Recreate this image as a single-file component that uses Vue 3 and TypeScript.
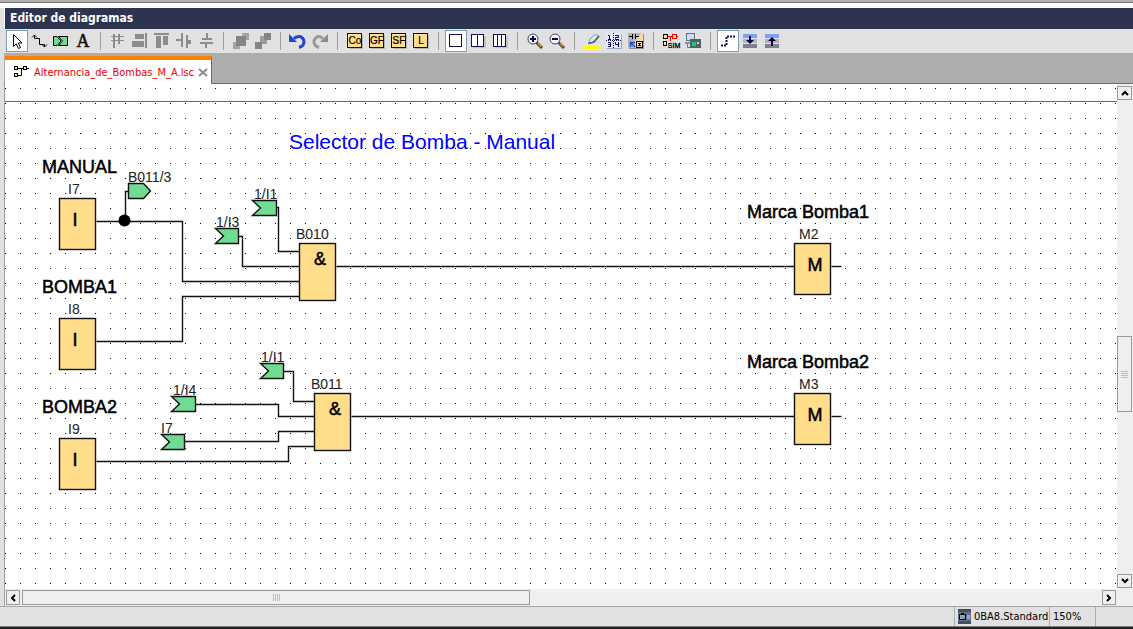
<script setup lang="ts">
import { ref } from 'vue'

interface Tool { id: string; label: string }
interface Block { x: number; y: number; h: number; name: string; nx: number; sym: string; sx: number; sy: number }
interface Tag { x: number; y: number; w: number; label: string; lx: number; ly: number }
interface Caption { x: number; y: number; text: string }

const groups: Tool[][] = [
  [
    { id: 'select', label: 'Herramienta de selección' },
    { id: 'wire', label: 'Herramienta de conexión' },
    { id: 'cut', label: 'Cortar/unir conexión' },
    { id: 'text', label: 'Herramienta de texto' },
  ],
  [
    { id: 'grid', label: 'Alinear automáticamente' },
    { id: 'right', label: 'Alinear a la derecha' },
    { id: 'top', label: 'Alinear arriba' },
    { id: 'hspace', label: 'Distribuir horizontalmente' },
    { id: 'vspace', label: 'Distribuir verticalmente' },
  ],
  [
    { id: 'front', label: 'Traer al frente' },
    { id: 'back', label: 'Enviar al fondo' },
  ],
  [
    { id: 'undo', label: 'Deshacer' },
    { id: 'redo', label: 'Rehacer' },
  ],
  [
    { id: 'Co', label: 'Constantes' },
    { id: 'GF', label: 'Funciones básicas' },
    { id: 'SF', label: 'Funciones especiales' },
    { id: 'L', label: 'Registro' },
  ],
  [
    { id: 'one', label: 'Una ventana' },
    { id: 'two', label: 'Dos ventanas' },
    { id: 'three', label: 'Tres ventanas' },
  ],
  [
    { id: 'zoomin', label: 'Ampliar' },
    { id: 'zoomout', label: 'Reducir' },
  ],
  [
    { id: 'marker', label: 'Resaltar' },
    { id: 'pages', label: 'Disposición de página' },
    { id: 'convert', label: 'Convertir' },
  ],
  [
    { id: 'sim', label: 'Simulación' },
    { id: 'online', label: 'Test online' },
  ],
  [
    { id: 'lines', label: 'Líneas de referencia' },
    { id: 'download', label: 'Expandir parámetros' },
    { id: 'upload', label: 'Contraer parámetros' },
  ],
]

const pressed = ref<string[]>(['select', 'one', 'lines'])

const blocks: Block[] = [
  { x: 59, y: 198, h: 51, name: 'I7', nx: 68, sym: 'I', sx: 75, sy: 226 },
  { x: 59, y: 318, h: 51, name: 'I8', nx: 68, sym: 'I', sx: 75, sy: 346 },
  { x: 59, y: 438, h: 51, name: 'I9', nx: 68, sym: 'I', sx: 75, sy: 466 },
  { x: 299, y: 243, h: 57, name: 'B010', nx: 296, sym: '&', sx: 320, sy: 265 },
  { x: 314, y: 393, h: 57, name: 'B011', nx: 311, sym: '&', sx: 335, sy: 415 },
  { x: 794, y: 243, h: 51, name: 'M2', nx: 799, sym: 'M', sx: 815, sy: 271 },
  { x: 794, y: 393, h: 51, name: 'M3', nx: 799, sym: 'M', sx: 815, sy: 421 },
]

const tags: Tag[] = [
  { x: 252, y: 200, w: 24, label: '1/I1', lx: 254, ly: 199 },
  { x: 215, y: 228, w: 23, label: '1/I3', lx: 216, ly: 227 },
  { x: 260, y: 363, w: 23, label: '1/I1', lx: 261, ly: 362 },
  { x: 171, y: 396, w: 24, label: '1/I4', lx: 173, ly: 395 },
  { x: 161, y: 434, w: 23, label: 'I7', lx: 161, ly: 433 },
]

const wires: string[] = [
  'M96 221H182V281H299',
  'M125 221V191H128',
  'M276 207H278V251H299',
  'M238 236H242V266H299',
  'M96 341H182V296H299',
  'M336 266H794',
  'M831 266H841',
  'M283 371H293V401H314',
  'M195 404H278V416H314',
  'M184 441H278V431H314',
  'M96 461H288V446H314',
  'M351 416H794',
  'M831 416H841',
]

const captions: Caption[] = [
  { x: 42, y: 173, text: 'MANUAL' },
  { x: 42, y: 293, text: 'BOMBA1' },
  { x: 42, y: 413, text: 'BOMBA2' },
  { x: 747, y: 218, text: 'Marca Bomba1' },
  { x: 747, y: 368, text: 'Marca Bomba2' },
]

function toggle(id: string) {
  const i = pressed.value.indexOf(id)
  if (i >= 0) pressed.value.splice(i, 1)
  else pressed.value.push(id)
}
</script>

<template>
  <div class="app">
    <div class="edge-top"></div>
    <main class="panel">
      <h1 class="title">Editor de diagramas</h1>

      <div class="toolbar" role="toolbar" aria-label="Herramientas">
        <div v-for="(group, g) in groups" :key="g" class="group">
          <button
            v-for="t in group"
            :key="t.id"
            type="button"
            class="tool"
            :class="{ on: pressed.includes(t.id) }"
            :aria-label="t.label"
            :aria-pressed="pressed.includes(t.id)"
            @click="toggle(t.id)"
          >
            <svg width="22" height="22" viewBox="0 0 22 22" fill="none">
              <path v-if="t.id === 'select'" d="M7.5 4.5V16.5L10.2 13.8L12.5 18.5L14.5 17.5L12.3 13H16Z" fill="#fff" stroke="#000" />
              <g v-else-if="t.id === 'wire'" stroke="#000">
                <path d="M6.500 5V8.500H11.500V14.500H16.500V17" />
                <path d="M4 7.500L6.500 5L9 7.500M14 14.500L16.500 17L19 14.500" />
              </g>
              <g v-else-if="t.id === 'cut'">
                <path d="M3.500 6.500H7L11 11L7 15.500H3.500Z" fill="#70db93" stroke="#000" />
                <path d="M8.500 6.500H17.500V15.500H8.500L12.500 11Z" fill="#70db93" stroke="#000" />
              </g>
              <text v-else-if="t.id === 'text'" x="11" y="17" class="serif">A</text>
              <g v-else-if="t.id === 'grid'" stroke="#8c8c8c">
                <path d="M7 4V18M12 4V14" stroke-width="2" />
                <path d="M4 6.500H17M4 10.500H17" />
              </g>
              <path v-else-if="t.id === 'right'" d="M6 4H15V9H6ZM3 11H15V17H3ZM16 3H18V18H16Z" fill="#8c8c8c" />
              <path v-else-if="t.id === 'top'" d="M3 3H18V5H3ZM5 6H10V18H5ZM12 6H17V15H12Z" fill="#8c8c8c" />
              <path v-else-if="t.id === 'hspace'" d="M8 3H10V17H8ZM3 9H8V11H3ZM13 5H15V18H13ZM15 10H18V14H15Z" fill="#8c8c8c" />
              <path v-else-if="t.id === 'vspace'" d="M11 3H13V8H17V10H7V8H11ZM5 12H18V14H12V18H10V14H5Z" fill="#8c8c8c" />
              <g v-else-if="t.id === 'front'">
                <path d="M12 3H19V10H12ZM3 12H10V19H3Z" fill="#a4a4a4" />
                <path d="M6 6H16V16H6Z" fill="#858585" />
              </g>
              <g v-else-if="t.id === 'back'">
                <path d="M8 6H15V14H8Z" fill="#9c9c9c" />
                <path d="M12 3H19V10H12ZM3 12H10V19H3Z" fill="#858585" />
              </g>
              <g v-else-if="t.id === 'undo'">
                <path d="M7 8.500Q10 6 13 6.500Q17 8 17 12Q17 16 12 17.500" stroke="#2346d2" stroke-width="3" />
                <path d="M2 4V12H10Z" fill="#2346d2" />
              </g>
              <g v-else-if="t.id === 'redo'">
                <path d="M14 8.500Q11 6 9 6.500Q5 8 5 12Q5 16 10 17.500" stroke="#9a9a9a" stroke-width="3" />
                <path d="M19 4V12H11Z" fill="#8c8c8c" />
              </g>
              <g v-else-if="['Co', 'GF', 'SF', 'L'].includes(t.id)">
                <path d="M5 5H19V19H5Z" fill="#b5b5b5" />
                <rect x="3.500" y="3.500" width="14" height="14" fill="#ffdd8a" stroke="#111" />
                <text x="11" y="14" class="tiny">{{ t.id }}</text>
              </g>
              <g v-else-if="t.id === 'one' || t.id === 'two' || t.id === 'three'">
                <path v-if="t.id !== 'one'" d="M6 6H19V18H6Z" fill="#c4c4c4" />
                <rect x="4.500" y="4.500" width="12" height="12" fill="#fff" stroke="#10104e" />
                <path v-if="t.id === 'two'" d="M10.500 5V16" stroke="#10104e" />
                <path v-if="t.id === 'three'" d="M8.500 5V16M12.500 5V16" stroke="#10104e" />
              </g>
              <g v-else-if="t.id === 'zoomin' || t.id === 'zoomout'">
                <path d="M12.500 12.500L18 18" stroke="#3c4a5a" stroke-width="3" />
                <path d="M14 13L17.500 16.500" stroke="#c88b32" stroke-width="2" />
                <circle cx="9" cy="9" r="5" fill="#f6f9fc" stroke="#453a62" />
                <path d="M6 9H12" stroke="#08084a" stroke-width="2" />
                <path v-if="t.id === 'zoomin'" d="M9 6V12" stroke="#08084a" stroke-width="2" />
              </g>
              <g v-else-if="t.id === 'marker'">
                <path d="M3 15H19V19H3Z" fill="#ff0" />
                <path d="M7.500 13.500L9 9L14 4.500L18 6L13 12Z" fill="#dce7ef" stroke="#8a9aa8" />
                <path d="M7.500 13.500L13 12L18 6" stroke="#3a5b7c" stroke-width="1.500" />
              </g>
              <g v-else-if="t.id === 'pages'">
                <rect x="4" y="4" width="15" height="15" fill="#9ba6c8" />
                <rect x="3" y="3" width="15" height="15" fill="#e4e9ff" />
                <path d="M10.500 3V18M3 10.500H18" stroke="#10104e" stroke-dasharray="1 1" />
                <path d="M5 5.500H6.500V9M5 9.500H8M12 5.500H15.500V7.500H12.500V9.500H16M5 12.500H7.500V17M5 14.500H7.500M5 16.500H7.500M12.500 12V14.500H16M15.500 12V17" stroke="#10104e" />
              </g>
              <g v-else-if="t.id === 'convert'">
                <path d="M4 4H19V19H4Z" fill="#8c8c8c" />
                <path d="M3 3H18V18H3Z" fill="#b4b4b4" />
                <path d="M18 3V18H10L10 11L16 3Z" fill="#f8d8a8" />
                <path d="M4 6.500H7M7.500 4V9M10.500 4V9M11 6.500H14" stroke="#000" />
                <path d="M10 17L6 13M5.500 17V12.500H10" stroke="#2346d2" stroke-width="1.500" />
                <rect x="11.500" y="11.500" width="6" height="6" fill="#f8d8a8" stroke="#000" />
                <path d="M14.500 13V16M13 13.500H16M13 15.500H16" stroke="#000" />
              </g>
              <g v-else-if="t.id === 'sim'">
                <path d="M7 6.500H18M10.500 6.500V11" stroke="#e00" />
                <rect x="3.500" y="4.500" width="4" height="4" fill="#ffe08c" stroke="#000" />
                <rect x="3.500" y="11.500" width="3" height="4" fill="#ffe08c" stroke="#000" />
                <rect x="12.500" y="4.500" width="4" height="4" fill="#ffe08c" stroke="#e00" />
                <text x="14" y="18" class="sim">SIM</text>
              </g>
              <g v-else-if="t.id === 'online'">
                <rect x="4.500" y="3.500" width="8" height="7" fill="#c9dcf0" stroke="#617188" />
                <path d="M3 12H12V14H3Z" fill="#8794a5" />
                <path d="M5.500 14V17.500H9" stroke="#00b84a" />
                <path d="M8 9H19V18H8Z" fill="#53616c" />
                <path d="M10 12H14V16H10Z" fill="#00dd50" /><path d="M15 12H17V14H15Z" fill="#c8d2d8" />
              </g>
              <path v-else-if="t.id === 'lines'" d="M4 15.500H9.500V6.500H18" stroke="#10104e" stroke-width="2" stroke-dasharray="2 1" />
              <g v-else>
                <path d="M4 4H18V8H4Z" fill="#7f9fff" />
                <path d="M4 9H18V13H4Z" fill="#b4b4ba" /><path d="M4 14H18V18H4Z" fill="#808088" />
                <path v-if="t.id === 'download'" d="M10 6H12V10H15L11 14L7 10H10Z" fill="#070748" />
                <path v-else d="M10 16H12V11H15L11 7L7 11H10Z" fill="#070748" />
              </g>
            </svg>
          </button>
        </div>
      </div>

      <div class="tabs" role="tablist">
        <div class="tab" role="tab" aria-selected="true">
          <svg class="tab-icon" width="16" height="14" viewBox="0 0 16 14" fill="none">
            <path d="M4 3.500H11M7.500 3.500V10.500H4" stroke="#000" />
            <g fill="#ffe08c" stroke="#000">
              <rect x=".5" y="1.500" width="3" height="3" />
              <rect x=".5" y="8.500" width="3" height="3" />
              <rect x="9.500" y="1.500" width="3" height="3" />
            </g>
            <path d="M13 3.500H15" stroke="#000" />
          </svg>
          <span class="tab-name">Alternancia_de_Bombas_M_A.lsc</span>
          <button type="button" class="close" aria-label="Cerrar">
            <svg width="10" height="9" viewBox="0 0 10 9"><path d="M1 1L9 8M9 1L1 8" stroke="#8a8a8a" stroke-width="2" /></svg>
          </button>
        </div>
      </div>

      <section class="work">
        <div class="canvas">
          <svg class="diagram" width="100%" height="100%" role="img" aria-label="Diagrama de bloques">
            <g transform="translate(-5 -84)">
              <defs>
                <pattern id="grid" x="5" y="88" width="15" height="15" patternUnits="userSpaceOnUse">
                  <rect width="1" height="1" fill="#000" />
                </pattern>
              </defs>
              <rect x="5" y="85" width="100%" height="100%" fill="url(#grid)" />
              <rect x="5" y="101" width="100%" height="1" fill="#00a651" />
              <text x="289" y="149" class="heading">Selector de Bomba - Manual</text>
              <text v-for="c in captions" :key="c.text" :x="c.x" :y="c.y" class="caption">{{ c.text }}</text>
              <g transform="translate(.5 .5)">
                <path v-for="w in wires" :key="w" :d="w" class="wire" />
                <circle cx="124" cy="220" r="6" />
                <path d="M128 183H143L150 190.500L143 198H128Z" class="tag" />
                <path v-for="t in tags" :key="t.x" :d="`M${t.x} ${t.y}h${t.w}v15h${-t.w}l8 -7.500z`" class="tag" />
                <rect v-for="b in blocks" :key="b.name" :x="b.x" :y="b.y" width="36" :height="b.h" class="block" />
              </g>
              <text x="128" y="182" class="name">B011/3</text>
              <text v-for="t in tags" :key="t.x" :x="t.lx" :y="t.ly" class="name">{{ t.label }}</text>
              <template v-for="b in blocks" :key="b.name">
                <text :x="b.nx" :y="b.y - 4" class="name">{{ b.name }}</text>
                <text :x="b.sx" :y="b.sy" class="caption symbol">{{ b.sym }}</text>
              </template>
            </g>
          </svg>
        </div>

        <div class="vbar" role="scrollbar" aria-orientation="vertical" aria-valuenow="59" aria-label="Desplazamiento vertical">
          <button type="button" class="arrow" aria-label="Subir"><svg width="8" height="8" viewBox="0 0 8 8"><path d="M1 6L4 3L7 6" /></svg></button>
          <div class="vtrack"><div class="thumb"><i></i><i></i><i></i><i></i></div></div>
          <button type="button" class="arrow" aria-label="Bajar"><svg width="8" height="8" viewBox="0 0 8 8"><path d="M1 2L4 5L7 2" /></svg></button>
        </div>

        <div class="hbar" role="scrollbar" aria-orientation="horizontal" aria-valuenow="0" aria-label="Desplazamiento horizontal">
          <button type="button" class="arrow" aria-label="Izquierda"><svg width="8" height="8" viewBox="0 0 8 8"><path d="M6 1L3 4L6 7" /></svg></button>
          <div class="htrack"><div class="thumb"><i></i><i></i><i></i><i></i></div></div>
          <button type="button" class="arrow" aria-label="Derecha"><svg width="8" height="8" viewBox="0 0 8 8"><path d="M2 1L5 4L2 7" /></svg></button>
        </div>
        <div class="corner"></div>
      </section>
    </main>

    <footer class="status">
      <div class="cell device">
        <svg width="13" height="15" viewBox="0 0 13 15">
          <path d="M0 0H13V15H0Z" fill="#61748a" /><path d="M0 0H13V3H0ZM0 12H13V15H0Z" fill="#40505f" />
          <path d="M1.500 5.500H7.500V10.500H1.500Z" fill="#8fa4b8" stroke="#000" /><path d="M3 4H6V5H3Z" />
          <path d="M9 6H12V10H9Z" fill="#9aa9b8" />
        </svg>
        <span>0BA8.Standard</span>
      </div>
      <div class="cell zoom">150%</div>
      <div class="cell last"></div>
    </footer>
  </div>
</template>

<style>
body { margin: 0; }
</style>

<style scoped>
.app {
  display: flex;
  flex-direction: column;
  height: 100vh;
  box-sizing: border-box;
  border-bottom: 2px solid #222;
  background: #fff;
  font-family: "DejaVu Sans Condensed", "DejaVu Sans", sans-serif;
  font-size: 11px;
  color: #000;
  overflow: hidden;
}
button { padding: 0; margin: 0; border: 0; background: none; font: inherit; }
.edge-top {
  flex: none;
  height: 2px;
  background: #b0b0b0;
  border-bottom: 1px solid #747474;
  margin-bottom: 5px;
}
.panel {
  flex: 1;
  min-height: 0;
  display: flex;
  flex-direction: column;
  border-left: 4px solid #e1e1e1;
}
.title {
  margin: 0 0 0 1px;
  padding-left: 5px;
  background: #2c3450;
  color: #fff;
  font-size: 12px;
  line-height: 21px;
  font-weight: bold;
}
.toolbar {
  display: flex;
  height: 24px;
  box-sizing: border-box;
  padding: 1px 2px;
  background: #e1e1e1;
}
.group { display: flex; }
.group + .group::before {
  content: "";
  width: 1px;
  height: 18px;
  margin: 2px 6px;
  background: #a0a0a0;
}
.tool { width: 22px; height: 22px; }
.tool svg { display: block; }
.tool.on { background: #fff; box-shadow: inset 0 0 0 1px #7c9cbc; }
.serif { font: 18px "Liberation Serif", serif; fill: #111; stroke: #111; stroke-width: .5px; text-anchor: middle; }
.tiny { font: 10px "Liberation Sans", sans-serif; fill: #000; stroke: #000; stroke-width: .2px; text-anchor: middle; }
.sim { font: 7px "Liberation Sans", sans-serif; fill: #000; stroke: #000; stroke-width: .3px; text-anchor: middle; }
.tabs {
  display: flex;
  height: 31px;
  box-sizing: border-box;
  padding: 3px 0 0 1px;
  background: linear-gradient(#6c6c6c, #6c6c6c) bottom / 100% 1px no-repeat #adadad;
}
.tab {
  display: flex;
  align-items: center;
  box-sizing: border-box;
  padding: 0 3px 0 9px;
  border-top: 4px solid #ff8000;
  border-right: 1px solid #6c6c6c;
  background: #fff;
}
.tab-icon { margin-right: 4px; }
.tab-name { color: #f00000; margin-right: 4px; }
.close { width: 10px; height: 9px; display: flex; }
.work {
  flex: 1;
  min-height: 0;
  display: grid;
  grid-template: 1fr 17px / 1fr 16px;
  border-left: 1px solid #a0a0a0;
}
.canvas { min-width: 0; min-height: 0; overflow: hidden; background: #fff; }
.diagram { display: block; }
.diagram text { font-family: "Liberation Sans", Arial, sans-serif; }
.heading { font-size: 21px; fill: #00f; }
.caption { font-size: 18px; fill: #000; stroke: #000; stroke-width: .5px; }
.symbol { text-anchor: middle; }
.name { font-size: 14px; fill: #222; }
.wire { fill: none; stroke: #111; stroke-width: 1.4px; }
.tag { fill: #70db93; stroke: #111; stroke-width: 1.4px; }
.block { fill: #ffdd8a; stroke: #111; stroke-width: 1.4px; }
.vbar, .hbar, .corner { background: #efefef; }
.vbar, .hbar { display: flex; }
.vbar { flex-direction: column; padding: 2px 1px 1px 0; }
.hbar { padding: 1px; }
.arrow {
  flex: none;
  width: 15px;
  height: 14px;
  box-sizing: border-box;
  border: 1px solid #9a9a9a;
  display: flex;
  align-items: center;
  justify-content: center;
}
.hbar .arrow { width: 14px; height: 15px; }
.arrow path { fill: none; stroke: #000; stroke-width: 2px; }
.vtrack, .htrack { flex: 1; display: grid; }
.vtrack { grid-template-rows: 236fr 76fr 162fr; }
.htrack { grid-template-columns: 2fr 508fr 571fr; }
.thumb {
  display: flex;
  align-items: center;
  justify-content: center;
  gap: 1px;
  border: 1px solid #9a9a9a;
}
.vtrack .thumb { grid-row: 2; flex-direction: column; }
.htrack .thumb { grid-column: 2; }
.thumb i { background: #bdbdbd; width: 7px; height: 1px; }
.htrack .thumb i { width: 1px; height: 7px; }
.status {
  flex: none;
  display: flex;
  justify-content: flex-end;
  height: 21px;
  box-sizing: border-box;
  border-top: 1px solid #a6a6a6;
  border-bottom: 1px solid #808080;
  background: #e1e1e1;
}
.cell {
  display: flex;
  align-items: center;
  box-sizing: border-box;
  border-left: 1px solid #aeaeb2;
  padding-left: 3px;
}
.device { width: 95px; gap: 3px; white-space: nowrap; }
.zoom { width: 46px; }
.last { width: 38px; }
</style>
